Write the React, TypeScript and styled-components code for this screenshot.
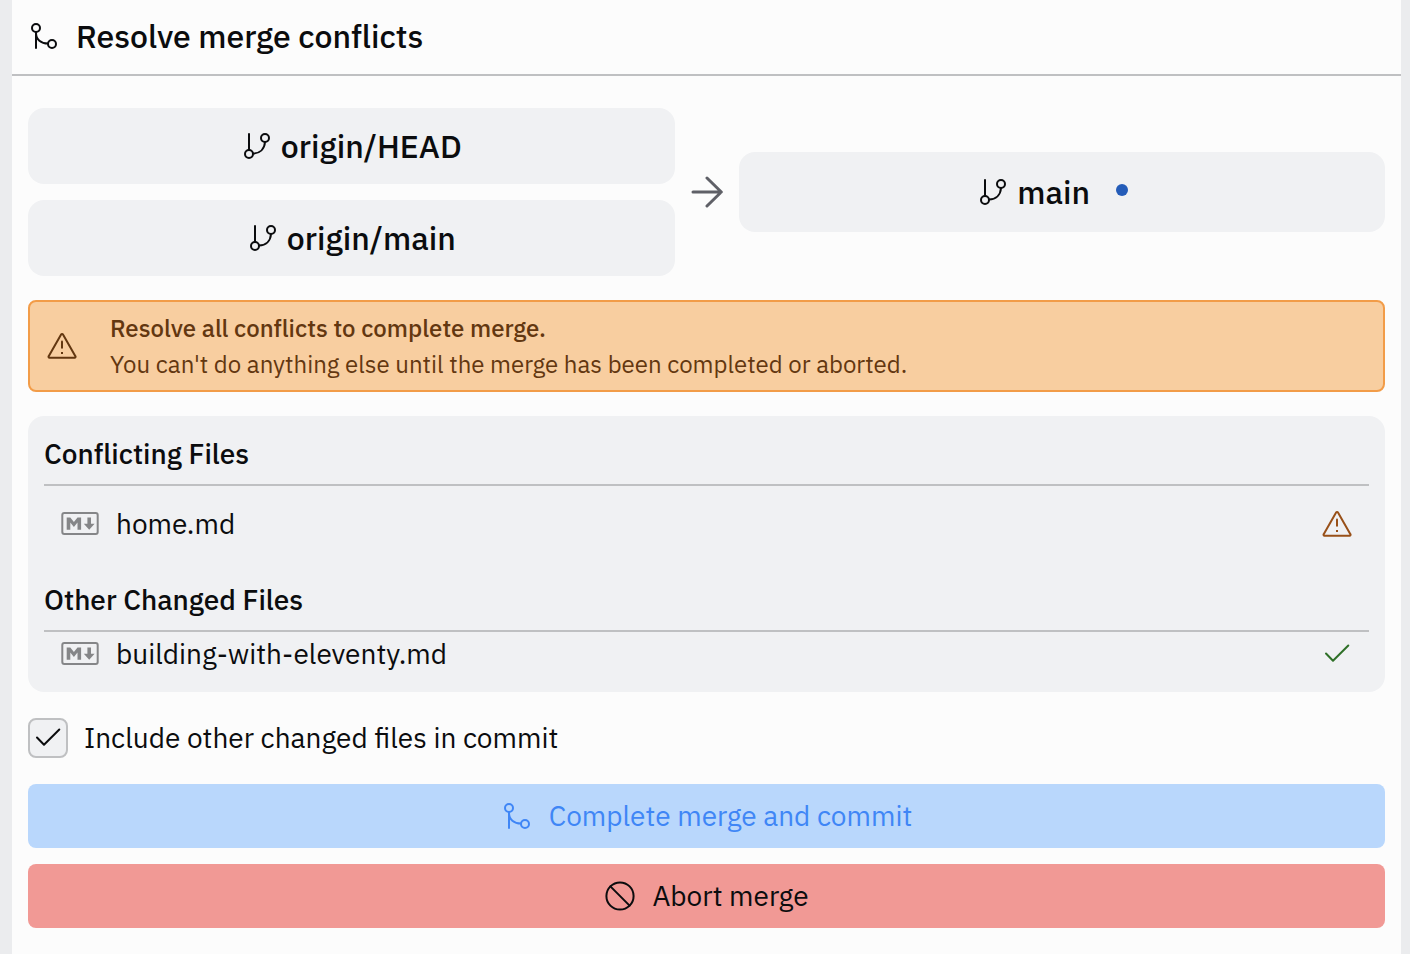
import React from "react";
import styled, { createGlobalStyle } from "styled-components";

const GlobalStyle = createGlobalStyle`
  *, *::before, *::after { box-sizing: border-box; }
  body {
    margin: 0;
    background: #ebecee;
    color: #0b0c0e;
    font-family: "IBM Plex Sans", Roboto, "Liberation Sans", sans-serif;
    font-size: 28px;
    line-height: 44px;
  }
  h1, h2, p, ul { margin: 0; padding: 0; }
`;

const Page = styled.main`
  min-height: 100vh;
  margin: 0 9px 0 12px;
  background: #fcfcfc;
`;

const Header = styled.header`
  display: flex;
  align-items: center;
  gap: 16px;
  height: 76px;
  padding: 0 16px 2px;
  border-bottom: 2px solid #bfc0c2;
`;

const Title = styled.h1`
  font-size: 32px;
  font-weight: 500;
`;

const Content = styled.div`
  display: flex;
  flex-direction: column;
  gap: 24px;
  padding: 32px 16px 24px;
`;

const Icon = styled.svg<{ $color?: string; $width?: number; $stroke?: number }>`
  flex: none;
  width: ${(p) => p.$width ?? 32}px;
  height: 32px;
  fill: none;
  stroke: ${(p) => p.$color ?? "currentColor"};
  stroke-width: ${(p) => p.$stroke ?? 2};
  stroke-linecap: round;
  stroke-linejoin: round;
`;

const Branches = styled.section`
  display: grid;
  grid-template-columns: minmax(0, 1fr) 32px minmax(0, 1fr);
  align-items: center;
  gap: 16px;
`;

const BranchList = styled.div`
  display: flex;
  flex-direction: column;
  gap: 16px;
`;

const BranchCard = styled.div`
  display: flex;
  align-items: center;
  justify-content: center;
  gap: 8px;
  padding: 16px;
  border-radius: 16px;
  background: #f0f1f3;
  font-size: 32px;
  font-weight: 500;
`;

const StatusSlot = styled.span`
  display: grid;
  place-items: center;
  width: 48px;
  height: 48px;
  padding-bottom: 4px;
`;

const StatusDot = styled.span`
  width: 12px;
  height: 12px;
  border-radius: 50%;
  background: #245cb8;
`;

const Alert = styled.div`
  display: flex;
  align-items: center;
  gap: 32px;
  padding: 8px 16px;
  border: 2px solid #f29c48;
  border-radius: 8px;
  background: #f8cea0;
  color: #633710;
  font-size: 24px;
  line-height: 36px;
`;

const AlertTitle = styled.p`
  font-weight: 500;
`;

const FilesPanel = styled.section`
  display: flex;
  flex-direction: column;
  gap: 32px;
  padding: 16px;
  border-radius: 16px;
  background: #f0f1f3;
`;

const GroupTitle = styled.h2`
  padding-bottom: 8px;
  border-bottom: 2px solid #bfc0c2;
  font-size: 28px;
  font-weight: 500;
`;

const FileList = styled.ul<{ $spaced?: boolean }>`
  padding-top: ${(p) => (p.$spaced ? 16 : 0)}px;
  list-style: none;
`;

const FileRow = styled.li`
  display: flex;
  align-items: center;
  gap: 16px;
  height: 44px;
  padding: 0 16px;
`;

const FileName = styled.span`
  flex: 1;
  min-width: 0;
`;

const CheckLabel = styled.label`
  display: flex;
  align-items: center;
  gap: 16px;
`;

const CheckBox = styled.span`
  display: grid;
  place-items: center;
  width: 40px;
  height: 40px;

  > * { grid-area: 1 / 1; }
  > svg { pointer-events: none; visibility: hidden; }
  > input:checked + svg { visibility: visible; }
`;

const CheckInput = styled.input`
  appearance: none;
  width: 40px;
  height: 40px;
  margin: 0;
  border: 2px solid #bfc0c2;
  border-radius: 8px;
  background: #f0f1f3;
`;

const Actions = styled.div`
  display: flex;
  flex-direction: column;
  gap: 16px;
`;

const ActionButton = styled.button<{ $tone: "primary" | "danger" }>`
  display: flex;
  align-items: center;
  justify-content: center;
  gap: 16px;
  height: 64px;
  padding: 0 16px;
  border: 0;
  border-radius: 8px;
  background: ${(p) => (p.$tone === "primary" ? "#b9d7fc" : "#f19995")};
  color: ${(p) => (p.$tone === "primary" ? "#3f86f6" : "#0b0c0e")};
  font: inherit;
`;

const MergeIcon = () => (
  <Icon viewBox="0 0 32 32" aria-hidden="true">
    <circle cx="8" cy="8" r="4" />
    <circle cx="24" cy="24" r="4" />
    <path d="M8 12V28M8 13C8 19.5 13 23.6 20 23.6" />
  </Icon>
);

const BranchIcon = () => (
  <Icon viewBox="0 0 32 32" aria-hidden="true">
    <circle cx="24" cy="8" r="4" />
    <circle cx="8" cy="24" r="4" />
    <path d="M8 4V20M24 12C23.5 19 19 23.3 12 23.6" />
  </Icon>
);

const WarningIcon = ({ color }: { color?: string }) => (
  <Icon viewBox="0 0 32 32" $color={color} aria-hidden="true">
    <path d="M15.1 4.6a1.1 1.1 0 0 1 1.9 0L29.4 26.2a1 1 0 0 1-.9 1.6H3.6a1 1 0 0 1-.9-1.6Z" />
    <path d="M16 11.5V17.8" />
    <path d="M15 22.9H17" strokeLinecap="butt" />
  </Icon>
);

const CheckIcon = ({ color }: { color?: string }) => (
  <Icon viewBox="0 0 32 32" $color={color} aria-hidden="true">
    <path d="M5 15.5L12 22.7L27.3 7.5" />
  </Icon>
);

const ArrowIcon = () => (
  <Icon viewBox="0 0 32 32" $color="#5f6067" $stroke={3} aria-hidden="true">
    <path d="M2 16H30M16 2L30.3 16L16 30" />
  </Icon>
);

const BanIcon = () => (
  <Icon viewBox="0 0 32 32" aria-hidden="true">
    <circle cx="16" cy="16" r="13.6" />
    <path d="M6.4 6.4L25.6 25.6" />
  </Icon>
);

const MarkdownIcon = () => (
  <Icon viewBox="0 0 40 32" $width={40} $color="#858688" role="img" aria-label="Markdown">
    <g transform="translate(1.3 4)">
      <rect x="1" y="1" width="35.4" height="21" rx="2" />
      <path
        transform="scale(0.18)"
        fill="#858688"
        stroke="none"
        d="M30 98V30h20l20 25 20-25h20v68H90V59L70 84 50 59v39zM155 98l-30-33h20V30h20v35h20z"
      />
    </g>
  </Icon>
);

export default function App() {
  return (
    <>
      <GlobalStyle />
      <Page>
        <Header>
          <MergeIcon />
          <Title>Resolve merge conflicts</Title>
        </Header>
        <Content>
          <Branches>
            <BranchList>
              <BranchCard><BranchIcon />origin/HEAD</BranchCard>
              <BranchCard><BranchIcon />origin/main</BranchCard>
            </BranchList>
            <ArrowIcon />
            <BranchCard>
              <BranchIcon />
              main
              <StatusSlot><StatusDot /></StatusSlot>
            </BranchCard>
          </Branches>

          <Alert role="alert">
            <WarningIcon />
            <div>
              <AlertTitle>Resolve all conflicts to complete merge.</AlertTitle>
              <p>You can't do anything else until the merge has been completed or aborted.</p>
            </div>
          </Alert>

          <FilesPanel>
            <div>
              <GroupTitle>Conflicting Files</GroupTitle>
              <FileList $spaced>
                <FileRow>
                  <MarkdownIcon />
                  <FileName>home.md</FileName>
                  <WarningIcon color="#985018" />
                </FileRow>
              </FileList>
            </div>
            <div>
              <GroupTitle>Other Changed Files</GroupTitle>
              <FileList>
                <FileRow>
                  <MarkdownIcon />
                  <FileName>building-with-eleventy.md</FileName>
                  <CheckIcon color="#2f7028" />
                </FileRow>
              </FileList>
            </div>
          </FilesPanel>

          <CheckLabel>
            <CheckBox>
              <CheckInput type="checkbox" defaultChecked />
              <CheckIcon />
            </CheckBox>
            Include other changed files in commit
          </CheckLabel>

          <Actions>
            <ActionButton type="button" $tone="primary" disabled>
              <MergeIcon />
              Complete merge and commit
            </ActionButton>
            <ActionButton type="button" $tone="danger">
              <BanIcon />
              Abort merge
            </ActionButton>
          </Actions>
        </Content>
      </Page>
    </>
  );
}
